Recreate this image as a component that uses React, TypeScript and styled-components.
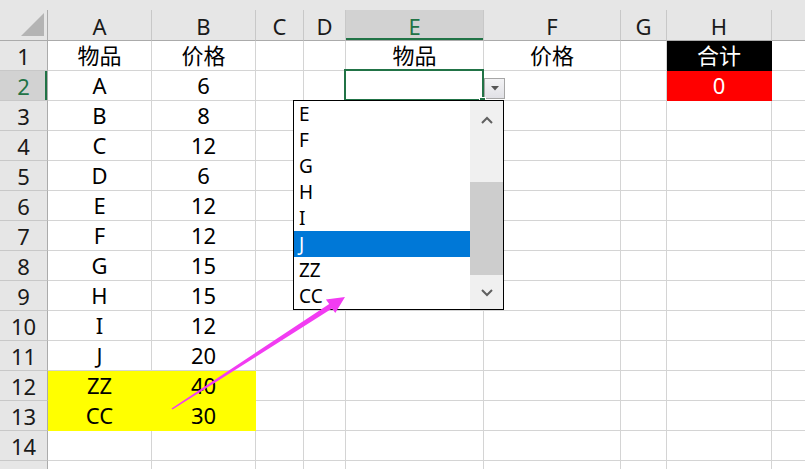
import React from 'react';
import styled, { createGlobalStyle, css } from 'styled-components';

const GlobalStyle = createGlobalStyle`
  html, body {
    margin: 0;
    padding: 0;
    background: #fff;
    overflow: hidden;
  }
  body {
    font-family: 'Noto Sans', 'Noto Sans CJK SC', sans-serif;
  }
`;

const COLS = [48, 104, 104, 48, 42, 138, 137, 46, 105, 104];
const LETTERS = ['A', 'B', 'C', 'D', 'E', 'F', 'G', 'H', ''];

type Fill = 'none' | 'yellow' | 'black' | 'red';

const fills: Record<Fill, { bg: string; line: string; color: string }> = {
  none: { bg: '#fff', line: '#d4d4d4', color: '#000' },
  yellow: { bg: '#ffff00', line: '#ffff00', color: '#000' },
  black: { bg: '#000', line: '#000', color: '#fff' },
  red: { bg: '#ff0000', line: '#ff0000', color: '#fff' },
};

const items = [
  ['A', '6'],
  ['B', '8'],
  ['C', '12'],
  ['D', '6'],
  ['E', '12'],
  ['F', '12'],
  ['G', '15'],
  ['H', '15'],
  ['I', '12'],
  ['J', '20'],
  ['ZZ', '40'],
  ['CC', '30'],
];

const listOptions = ['E', 'F', 'G', 'H', 'I', 'J', 'ZZ', 'CC'];

const App = () => {
  const rows: { cells: string[]; fills: Fill[] }[] = [];
  rows.push({
    cells: ['物品', '价格', '', '', '物品', '价格', '', '合计', ''],
    fills: ['none', 'none', 'none', 'none', 'none', 'none', 'none', 'black', 'none'],
  });
  items.forEach(([name, price], i) => {
    const rowNo = i + 2;
    const yellow = rowNo === 12 || rowNo === 13;
    const f: Fill = yellow ? 'yellow' : 'none';
    rows.push({
      cells: [name, price, '', '', '', '', '', rowNo === 2 ? '0' : '', ''],
      fills: [f, f, 'none', 'none', 'none', 'none', 'none', rowNo === 2 ? 'red' : 'none', 'none'],
    });
  });
  rows.push({ cells: Array(9).fill(''), fills: Array(9).fill('none') });
  rows.push({ cells: Array(9).fill(''), fills: Array(9).fill('none') });

  return (
    <Page>
      <GlobalStyle />
      <TopStrip />
      <Sheet>
        <Corner>
          <CornerTriangle />
        </Corner>
        {LETTERS.map((l, i) => (
          <ColHeader key={i} active={l === 'E'}>
            {l}
          </ColHeader>
        ))}
        {rows.map((row, r) => (
          <React.Fragment key={r}>
            <RowHeader active={r === 1}>{r + 1}</RowHeader>
            {row.cells.map((text, c) =>
              r === 1 && c === 4 ? (
                <ActiveCell key={c} fill="none">
                  <FillHandle />
                  <DropButton>
                    <svg width="8" height="5" viewBox="0 0 8 5">
                      <path d="M0 0 L8 0 L4 4.5 Z" fill="#555" />
                    </svg>
                  </DropButton>
                  <ListBox>
                    <Options>
                      {listOptions.map((o) => (
                        <Option key={o} selected={o === 'J'}>
                          {o}
                        </Option>
                      ))}
                    </Options>
                    <ScrollBar>
                      <ScrollButton size={37}>
                        <svg width="12" height="8" viewBox="0 0 12 8">
                          <polyline points="1,7 6,2 11,7" fill="none" stroke="#606060" strokeWidth="2" />
                        </svg>
                      </ScrollButton>
                      <Track>
                        <Thumb offset={44} length={93} />
                      </Track>
                      <ScrollButton size={33}>
                        <svg width="12" height="8" viewBox="0 0 12 8">
                          <polyline points="1,1 6,6 11,1" fill="none" stroke="#606060" strokeWidth="2" />
                        </svg>
                      </ScrollButton>
                    </ScrollBar>
                  </ListBox>
                </ActiveCell>
              ) : (
                <Cell key={c} fill={row.fills[c]}>
                  {text}
                </Cell>
              )
            )}
          </React.Fragment>
        ))}
      </Sheet>
      <ArrowLayer width="805" height="469" viewBox="0 0 805 469">
        <polygon
          points="171.5,408.4 329.2,303.9 325.9,299.5 345,297 335.3,312.9 332.0,308.5 172.5,409.6"
          fill="#f23cf2"
        />
      </ArrowLayer>
    </Page>
  );
};

const Page = styled.div`
  position: relative;
  width: 805px;
  height: 469px;
  overflow: hidden;
  background: #fff;
`;

const TopStrip = styled.div`
  height: 10px;
  background: #e6e6e6;
`;

const Sheet = styled.div`
  display: grid;
  grid-template-columns: ${COLS.map((w) => `${w}px`).join(' ')};
  grid-template-rows: 31px repeat(15, 30px);
  font-family: 'Noto Sans', 'Noto Sans CJK SC', sans-serif;
  font-size: 22px;
`;

const headerBase = css`
  box-sizing: border-box;
  background: #e6e6e6;
  color: #1a1a1a;
  text-align: center;
  white-space: nowrap;
  overflow: hidden;
`;

const Corner = styled.div`
  ${headerBase};
  position: relative;
  border-right: 1px solid #ababab;
  border-bottom: 1px solid #ababab;
`;

const CornerTriangle = styled.div`
  position: absolute;
  right: 3px;
  bottom: 4px;
  width: 0;
  height: 0;
  border-left: 23px solid transparent;
  border-bottom: 23px solid #b4b4b4;
`;

const ColHeader = styled.div<{ active?: boolean }>`
  ${headerBase};
  border-right: 1px solid #c8c8c8;
  border-bottom: 1px solid #ababab;
  line-height: 32px;
  ${(p) =>
    p.active &&
    css`
      background: #d2d2d2;
      color: #217346;
      box-shadow: inset 0 -2px 0 #217346;
    `}
`;

const RowHeader = styled.div<{ active?: boolean }>`
  ${headerBase};
  border-right: 1px solid #ababab;
  border-bottom: 1px solid #c8c8c8;
  line-height: 30px;
  ${(p) =>
    p.active &&
    css`
      background: #d2d2d2;
      color: #217346;
      box-shadow: inset -2px 0 0 #217346;
    `}
`;

const Cell = styled.div<{ fill: Fill }>`
  box-sizing: border-box;
  background: ${(p) => fills[p.fill].bg};
  color: ${(p) => fills[p.fill].color};
  border-right: 1px solid ${(p) => fills[p.fill].line};
  border-bottom: 1px solid ${(p) => fills[p.fill].line};
  text-align: center;
  line-height: 29px;
  white-space: nowrap;
  overflow: hidden;
`;

const ActiveCell = styled(Cell)`
  position: relative;
  overflow: visible;
  z-index: 2;

  &::after {
    content: '';
    position: absolute;
    left: -2px;
    top: -2px;
    right: -1px;
    bottom: -1px;
    border: 2px solid #217346;
    pointer-events: none;
  }
`;

const FillHandle = styled.div`
  position: absolute;
  right: -3px;
  bottom: -4px;
  width: 5px;
  height: 5px;
  background: #217346;
  border: 1px solid #fff;
  z-index: 1;
`;

const DropButton = styled.div`
  position: absolute;
  left: 138px;
  top: 7px;
  box-sizing: border-box;
  width: 21px;
  height: 21px;
  border: 1px solid #a6a6a6;
  background: linear-gradient(#f3f3f5, #e1e1e6);
  display: flex;
  align-items: center;
  justify-content: center;
`;

const ListBox = styled.div`
  position: absolute;
  left: -53px;
  top: 29px;
  width: 209px;
  height: 208px;
  border: 1px solid #000;
  background: #fff;
  display: flex;
  z-index: 3;
  text-align: left;
`;

const Options = styled.div`
  flex: 1;
  display: flex;
  flex-direction: column;
`;

const Option = styled.div<{ selected?: boolean }>`
  height: 26px;
  line-height: 27px;
  padding-left: 5px;
  font-family: 'Noto Sans', 'Noto Sans CJK SC', sans-serif;
  font-size: 19px;
  color: ${(p) => (p.selected ? '#fff' : '#000')};
  background: ${(p) => (p.selected ? '#0078d7' : 'transparent')};
`;

const ScrollBar = styled.div`
  width: 33px;
  background: #f0f0f0;
  display: flex;
  flex-direction: column;
`;

const ScrollButton = styled.div<{ size: number }>`
  height: ${(p) => p.size}px;
  display: flex;
  align-items: center;
  justify-content: center;
  flex-shrink: 0;
`;

const Track = styled.div`
  flex: 1;
`;

const Thumb = styled.div<{ offset: number; length: number }>`
  margin-top: ${(p) => p.offset}px;
  height: ${(p) => p.length}px;
  background: #cdcdcd;
`;

const ArrowLayer = styled.svg`
  position: absolute;
  left: 0;
  top: 0;
  z-index: 10;
  pointer-events: none;
`;

export default App;
